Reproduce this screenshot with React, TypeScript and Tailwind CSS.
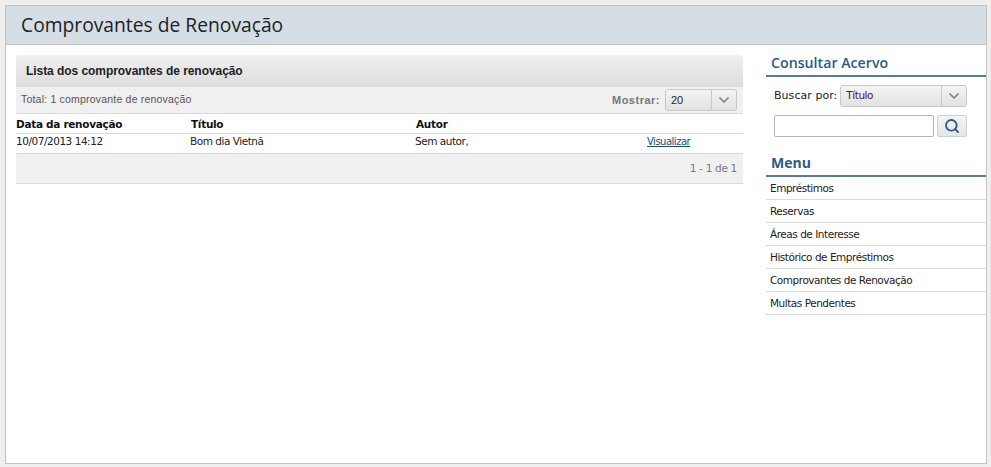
import React from 'react';
import { ChevronDown, Search } from "lucide-react";

const menuItems = [
  "Empréstimos",
  "Reservas",
  "Áreas de Interesse",
  "Histórico de Empréstimos",
  "Comprovantes de Renovação",
  "Multas Pendentes",
];

const tahoma = "font-['DejaVu_Sans',sans-serif] text-[10.5px] tracking-[-0.47px]";

const App = () => {
  return (
    <div className="h-[467px] w-[991px] overflow-hidden bg-[#efefef] pt-[5px] pl-[5px] pr-[4px] pb-[3px]">
      <div className="flex h-full flex-col border border-[#c4c4c4] bg-white">
        {/* Title */}
        <header className="h-[39px] shrink-0 border-b border-[#c4c4c4] bg-[#d6dee5] pl-[15px]">
          <h1 className="font-['Open_Sans',sans-serif] text-[19.25px] leading-[38px] text-[#222]">Comprovantes de Renovação</h1>
        </header>

        <div className="flex flex-1 pt-[10px] pl-[10px]">
          {/* Main */}
          <main className="w-[727px] shrink-0">
            <div className="h-[32px] rounded-t-[3px] border-b-2 border-[#dcdcdc] bg-gradient-to-b from-[#f0f0f0] to-[#dedede] pl-[10px] font-['Liberation_Sans',sans-serif] text-[12px] font-bold leading-[33px] tracking-[-0.06px] text-[#222]">
              Lista dos comprovantes de renovação
            </div>
            <div className="flex h-[27px] items-center justify-between border-b border-[#d9d9d9] bg-[#f0f0f0] pl-[5px] pr-[6px]">
              <span className="font-['Liberation_Sans',sans-serif] text-[10.5px] tracking-[0.2px] text-[#555]">Total: 1 comprovante de renovação</span>
              <div className="flex items-center gap-[5px]">
                <span className="font-['Liberation_Sans',sans-serif] text-[11px] font-bold tracking-[0.5px] text-[#777]">Mostrar:</span>
                <div className="flex h-[22px] w-[72px] items-center rounded-[3px] border border-[#c8c8c8] bg-gradient-to-b from-[#f4f4f4] to-[#e2e2e2]">
                  <span className="flex-1 pl-[5px] font-['Liberation_Sans',sans-serif] text-[11px] text-[#222]">20</span>
                  <span className="flex h-full w-[25px] items-center justify-center border-l border-[#c8c8c8]">
                    <ChevronDown size={16} strokeWidth={2.5} className="text-[#808080]" />
                  </span>
                </div>
              </div>
            </div>
            <div className="grid h-[20px] grid-cols-[175px_225px_1fr] items-end border-b border-[#d9d9d9] font-['DejaVu_Sans',sans-serif] text-[10.5px] font-bold leading-[17px] tracking-[-0.3px] text-[#111]">
              <span>Data da renovação</span>
              <span>Título</span>
              <span>Autor</span>
            </div>
            <div className={`grid h-[20px] grid-cols-[174px_225px_232px_1fr] items-start border-b border-[#d9d9d9] leading-[15px] text-[#222] ${tahoma}`}>
              <span>10/07/2013 14:12</span>
              <span>Bom dia Vietnã</span>
              <span>Sem autor,</span>
              <a href="#" className="text-[10px] tracking-[-0.5px] text-[#1c4a7a] underline">Visualizar</a>
            </div>
            <div className="flex h-[30px] items-center justify-end border-b border-[#d9d9d9] bg-[#f0f0f0] pr-[6px] font-['DejaVu_Sans',sans-serif] text-[10.5px] tracking-[-0.3px] text-[#777]">
              1 - 1 de 1
            </div>
          </main>

          {/* Sidebar */}
          <aside className="ml-[23px] flex-1">
            <h2 className="h-[22px] border-b-2 border-[#5a7b9a] pl-[5px] font-['Open_Sans',sans-serif] text-[14.2px] font-semibold leading-[15px] text-[#2b5b8a]">Consultar Acervo</h2>
            <div className="flex items-center pt-[8px] pl-[8px]">
              <span className="font-['DejaVu_Sans',sans-serif] text-[11px] tracking-[0.05px] text-[#222]">Buscar por:</span>
              <div className="ml-[3px] flex h-[22px] w-[127px] items-center rounded-[3px] border border-[#c8c8c8] bg-gradient-to-b from-[#f4f4f4] to-[#e2e2e2]">
                <span className={`flex-1 pl-[5px] text-[#4a1a3a] ${tahoma}`}>Título</span>
                <span className="flex h-full w-[25px] items-center justify-center border-l border-[#c8c8c8]">
                  <ChevronDown size={16} strokeWidth={2.5} className="text-[#808080]" />
                </span>
              </div>
            </div>
            <div className="flex items-center gap-[3px] pt-[8px] pl-[8px]">
              <input className="h-[22px] w-[160px] rounded-[2px] border border-[#b5b5b5] bg-white" />
              <button className="flex h-[22px] w-[30px] items-center justify-center rounded-[2px] border border-[#d0d0d0] bg-gradient-to-b from-[#f4f4f4] to-[#e4e4e4]">
                <Search size={16} strokeWidth={2.75} className="text-[#2b5b8a]" />
              </button>
            </div>
            <h2 className="mt-[16px] h-[24px] border-b-2 border-[#5a7b9a] pl-[5px] font-['Open_Sans',sans-serif] text-[14px] font-bold leading-[20px] text-[#2b5b8a]">Menu</h2>
            <ul>
              {menuItems.map((item) => (
                <li key={item} className={`flex h-[23px] items-center border-b border-[#dcdcdc] pl-[4px] pt-[2px] text-[#222] ${tahoma}`}>
                  {item}
                </li>
              ))}
            </ul>
          </aside>
        </div>
      </div>
    </div>
  );
};

export default App;
